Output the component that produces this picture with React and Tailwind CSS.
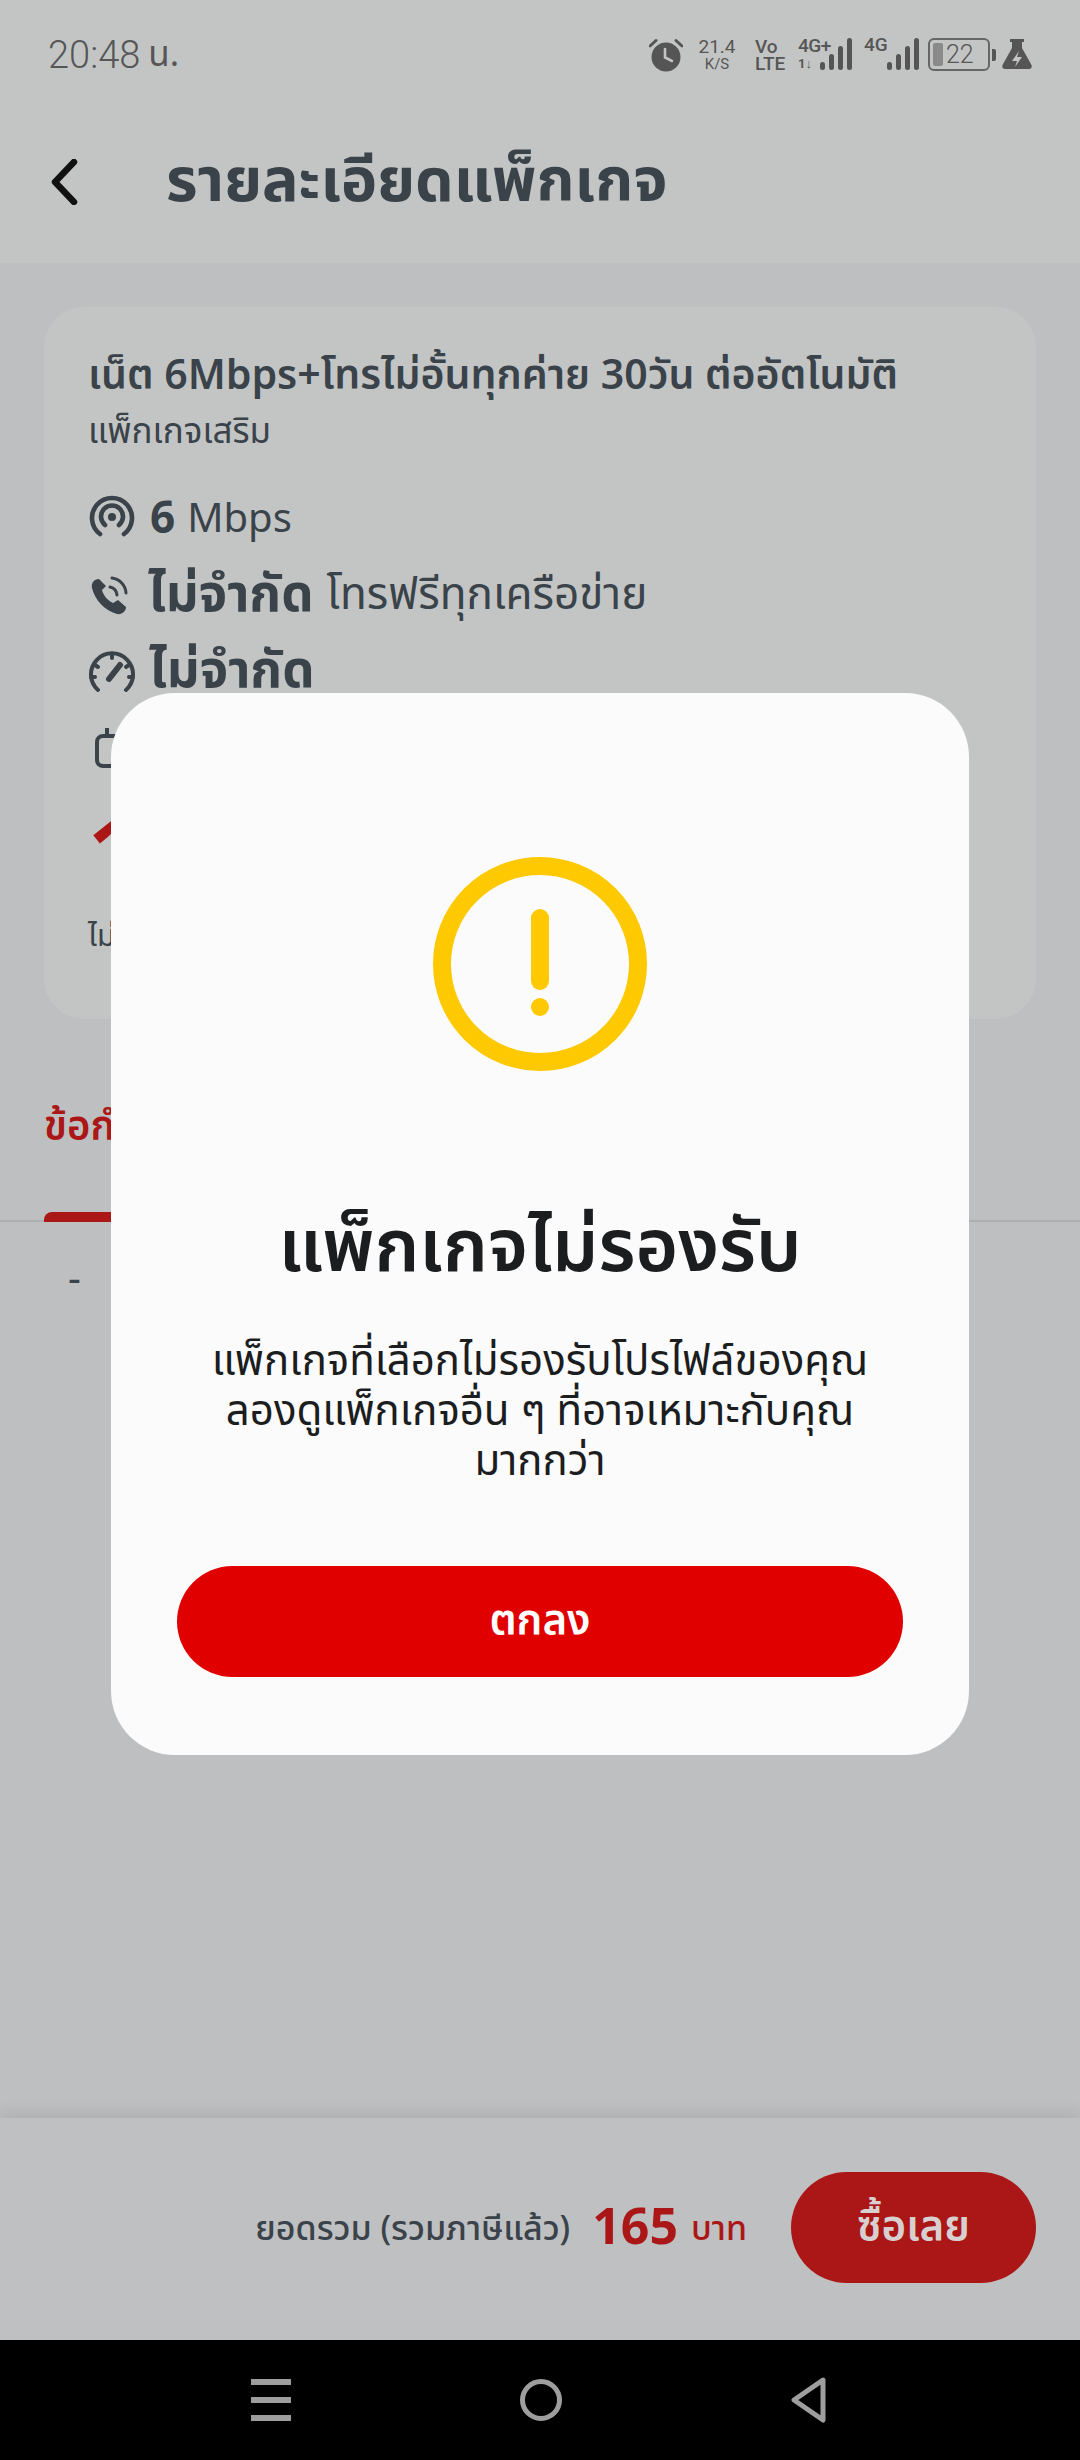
function Bars({ className }) {
  return (
    <svg className={className} width="32" height="32" viewBox="0 0 32 32" fill="#555">
      <rect x="0" y="24" width="5" height="8" rx="2.5" />
      <rect x="9" y="16" width="5" height="16" rx="2.5" />
      <rect x="18" y="8" width="5" height="24" rx="2.5" />
      <rect x="27" y="0" width="5" height="32" rx="2.5" />
    </svg>
  );
}

function StatusBar() {
  return (
    <div className="h-[108px] pt-[39px] pl-[48px] pr-[48px] flex items-start justify-between font-[Roboto,sans-serif] text-[#565656]">
      <div className="flex items-center h-[32px] gap-[8px] text-[38px] font-light leading-none">
        <span>20:48</span>
        <span className="font-['Noto_Sans_Thai',sans-serif] text-[35px] font-normal">น.</span>
      </div>
      <div className="flex items-start h-[34px] -mt-[1px]">
        <svg width="34" height="34" viewBox="0 0 34 34" fill="#555">
          <circle cx="17" cy="19" r="14.5" />
          <path d="M1 8 L7 2.5 M33 8 L27 2.5" stroke="#555" strokeWidth="3" strokeLinecap="round" />
          <path d="M16 11 V19.5 L23 23" stroke="#c3c5c4" strokeWidth="2.6" fill="none" strokeLinecap="round" />
        </svg>
        <div className="ml-[14px] w-[40px] flex flex-col items-center text-[19px] leading-[18px]">
          <span>21.4</span>
          <span className="text-[15px] leading-[16px]">K/S</span>
        </div>
        <div className="ml-[18px] w-[30px] flex flex-col text-[19px] leading-[17px] font-medium">
          <span>Vo</span>
          <span className="text-[19px] leading-[17px] font-medium">LTE</span>
        </div>
        <div className="ml-[13px] relative w-[54px] h-[32px]">
          <span className="absolute left-0 top-[-2px] text-[19px] leading-[20px] font-medium tracking-[-0.5px]">4G+</span>
          <span className="absolute left-0 top-[19px] text-[13px] leading-[13px] font-bold">1↓</span>
          <Bars className="absolute right-0 top-0" />
        </div>
        <div className="ml-[12px] relative w-[55px] h-[32px]">
          <span className="absolute left-0 top-[-3px] text-[19px] leading-[20px] font-medium">4G</span>
          <Bars className="absolute right-0 top-0" />
        </div>
        <div className="ml-[9px] relative w-[62px] h-[33px] border-[2px] border-[#666] rounded-[6px] flex items-center">
          <div className="absolute left-[3px] top-[3px] bottom-[3px] w-[10px] rounded-[2px] bg-[#8a8a8a]" />
          <span className="ml-[16px] text-[25px] leading-none font-light">22</span>
          <div className="absolute right-[-8px] top-[9px] w-[4px] h-[12px] bg-[#555] rounded-r-[2px]" />
        </div>
        <svg className="ml-[12px]" width="30" height="32" viewBox="0 0 30 32">
          <path d="M8 1 H22 V4 H20 V10 L29.5 27 Q30.5 31 27 31 H3 Q-0.5 31 0.5 27 L10 10 V4 H8 Z" fill="#555" />
          <path d="M17 13 L10 23 H15 L13 29 L20 19 H15 Z" fill="#c3c5c4" />
        </svg>
      </div>
    </div>
  );
}

function Row({ icon, children, className }) {
  return <div className={`flex items-center h-[76px] ${className || ""}`}>{icon}{children}</div>;
}

export default function App() {
  return (
    <div className="relative w-[1080px] h-[2460px] overflow-hidden flex flex-col bg-[#bebfc1] font-['Noto_Sans_Thai',sans-serif] text-[#3a424a]">
      <header className="h-[263px] shrink-0 bg-[#c3c5c4]">
        <StatusBar />
        <div className="flex items-center h-[80px] mt-[34px] pl-[50px]">
          <svg width="28" height="46" viewBox="0 0 28 46" fill="none">
            <path d="M24 3 L5 23 L24 43" stroke="#111" strokeWidth="6.5" strokeLinecap="round" strokeLinejoin="round" />
          </svg>
          <h1 className="ml-[88px] text-[61px] leading-none font-bold">รายละเอียดแพ็กเกจ</h1>
        </div>
      </header>

      <main className="flex-1 min-h-0">
        <section className="mx-[44px] mt-[44px] h-[712px] rounded-[40px] bg-[#c3c5c4] pl-[44px] pt-[44px]">
          <h2 className="text-[41px] leading-[50px] font-semibold whitespace-nowrap">เน็ต 6Mbps+โทรไม่อั้นทุกค่าย 30วัน ต่ออัตโนมัติ</h2>
          <p className="mt-[10px] text-[35px] leading-[44px]">แพ็กเกจเสริม</p>
          <div className="mt-[27px] flex flex-col">
            <Row icon={
              <svg className="mr-[15px] ml-[1px] -mt-[6px]" width="46" height="44" viewBox="0 0 46 44" fill="none" stroke="#3a424a" strokeWidth="4.6" strokeLinecap="round">
                <path d="M11 39 A20 20 0 1 1 35 39" />
                <path d="M16 30 A11 11 0 1 1 30 30" />
                <circle cx="23" cy="22" r="4" fill="#3a424a" stroke="none" />
              </svg>
            }>
              <span className="text-[44px] font-bold mr-[12px]">6</span>
              <span className="text-[40px]">Mbps</span>
            </Row>
            <Row icon={
              <svg className="mr-[19px] ml-[1px]" width="40" height="40" viewBox="0 0 40 40" fill="none">
                <path d="M10 3 C5 3 2 7 3 12 C6 24 15 34 28 38 C33 39 37 35 37 31 L29 24 L24 27 C19 25 14 19 13 14 L17 10 Z" fill="#3a424a" />
                <path d="M21 11 A9 9 0 0 1 28 19 M23 2 A16 16 0 0 1 37 17" stroke="#3a424a" strokeWidth="3" strokeLinecap="round" />
              </svg>
            }>
              <span className="text-[51px] font-bold mr-[13px]">ไม่จำกัด</span>
              <span className="text-[44px]">โทรฟรีทุกเครือข่าย</span>
            </Row>
            <Row icon={
              <svg className="mr-[14px] ml-[1px]" width="46" height="42" viewBox="0 0 46 42" fill="none" stroke="#3a424a" strokeWidth="4" strokeLinecap="round">
                <path d="M9 39 A21 21 0 1 1 37 39" />
                <path d="M23 3 V7 M6 14 L9 16 M40 14 L37 16 M2 26 H6 M44 26 H40" />
                <path d="M20 28 L31 14" strokeWidth="6" />
              </svg>
            }>
              <span className="text-[51px] font-bold">ไม่จำกัด</span>
            </Row>
            <Row icon={
              <svg className="mr-[14px] ml-[7px]" width="46" height="40" viewBox="0 0 46 40" fill="none" stroke="#3a424a" strokeWidth="4" strokeLinecap="round">
                <rect x="2" y="8" width="42" height="30" rx="6" />
                <path d="M12 1 V8 M34 1 V8" />
              </svg>
            }>
              <span className="text-[40px]">30 วัน</span>
            </Row>
          </div>
          <div className="mt-[30px] flex items-baseline text-[#ab1717] font-bold">
            <span className="text-[90px] leading-[80px]">165</span>
          </div>
          <p className="mt-[21px] text-[30px] leading-[40px]">ไม่รวมภาษีมูลค่าเพิ่ม</p>
        </section>

        <nav className="mt-[76px] h-[127px] border-b-[2px] border-[#adaeb0] relative">
          <p className="pl-[44px] pt-[8px] text-[40px] leading-[50px] font-semibold text-[#ab1717]">ข้อกำหนดและเงื่อนไข</p>
          <div className="absolute left-[44px] bottom-[-2px] w-[300px] h-[10px] rounded-t-[8px] bg-[#ab1717]" />
        </nav>
        <div className="pl-[68px] pt-[38px] text-[40px] leading-[40px]">-</div>
      </main>

      <footer className="relative h-[222px] shrink-0 bg-[#bfc0c2] shadow-[0_-5px_14px_rgba(0,0,0,0.09)] flex items-center justify-end pr-[44px] pb-[4px]">
        <span className="mt-[4px] text-[34px] font-medium mr-[22px]">ยอดรวม (รวมภาษีแล้ว)</span>
        <span className="mt-[4px] text-[50px] leading-none font-bold text-[#ab1717] mr-[13px]">165</span>
        <span className="mt-[4px] text-[34px] font-medium text-[#ab1717] mr-[44px]">บาท</span>
        <button className="w-[245px] h-[111px] rounded-[56px] bg-[#ab1717] text-[#d8d0d0] text-[42px] font-semibold">ซื้อเลย</button>
      </footer>

      <div className="h-[120px] shrink-0 bg-black flex items-center justify-center gap-[229px] pr-[3px]">
        <div className="w-[40px] flex flex-col gap-[12px]">
          <div className="h-[6px] bg-[#9e9e9e]" />
          <div className="h-[6px] bg-[#9e9e9e]" />
          <div className="h-[6px] bg-[#9e9e9e]" />
        </div>
        <div className="w-[42px] h-[42px] rounded-full border-[5px] border-[#9e9e9e]" />
        <svg width="36" height="46" viewBox="0 0 36 46" fill="none">
          <path d="M32 3 L3 23 L32 43 Z" stroke="#9e9e9e" strokeWidth="5" strokeLinejoin="round" />
        </svg>
      </div>

      <div className="absolute inset-0 flex justify-center pt-[693px]">
        <div className="w-[858px] h-[1062px] rounded-[64px] bg-[#fbfbfb] flex flex-col items-center pt-[163px] text-[#1c1d1f]">
          <svg width="216" height="216" viewBox="0 0 216 216" fill="none">
            <circle cx="108" cy="108" r="98" stroke="#fec900" strokeWidth="18" />
            <path d="M108 62 V125" stroke="#fec900" strokeWidth="18" strokeLinecap="round" />
            <circle cx="108" cy="151" r="9" fill="#fec900" />
          </svg>
          <h3 className="mt-[132px] text-[73px] leading-[90px] font-semibold">แพ็กเกจไม่รองรับ</h3>
          <p className="mt-[43px] text-[42px] leading-[50px] text-center">
            แพ็กเกจที่เลือกไม่รองรับโปรไฟล์ของคุณ<br />ลองดูแพ็กเกจอื่น ๆ ที่อาจเหมาะกับคุณ<br />มากกว่า
          </p>
          <button className="mt-[79px] w-[726px] h-[111px] rounded-[56px] bg-[#e00000] text-white text-[42px] font-semibold">ตกลง</button>
        </div>
      </div>
    </div>
  );
}
